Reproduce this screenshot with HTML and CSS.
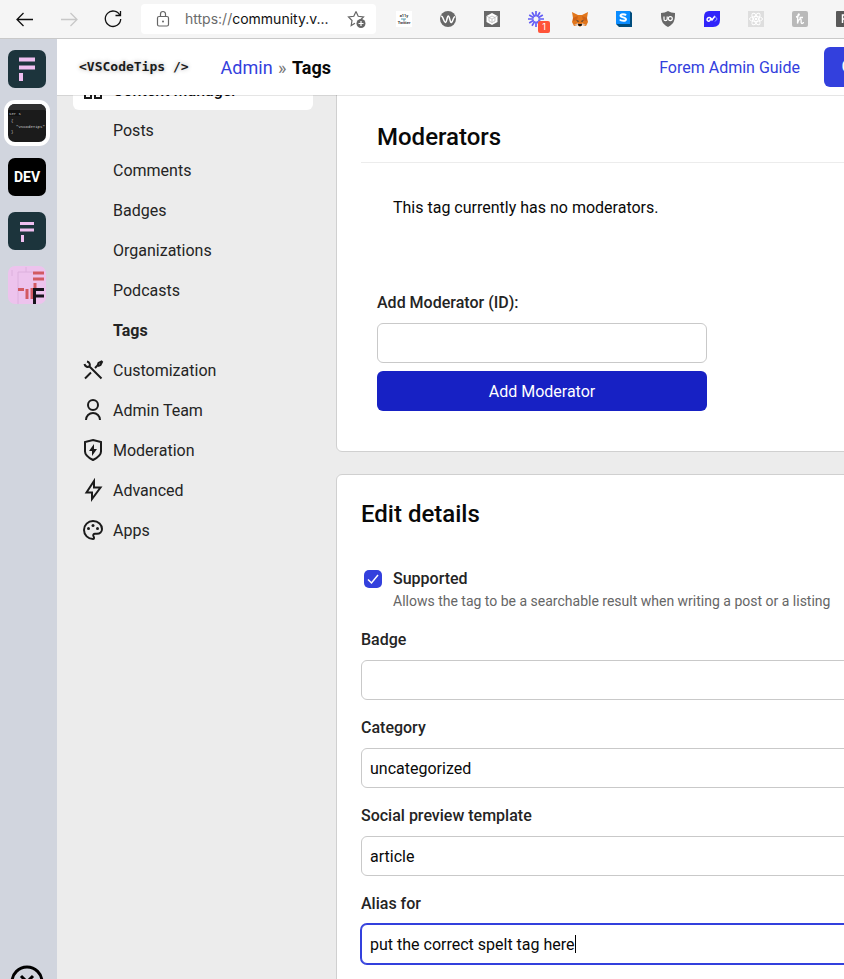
FILE: index.html
```
<!doctype html>
<html lang="en">
    <head>
        <meta charset="utf-8">
        <title>Tags</title>
        <meta name="viewport" content="width=device-width, initial-scale=1">
        <link rel="stylesheet" href="styles.css">
    </head>
    <body>
        <div class="toolbar">
            <button class="tool" aria-label="Back"><svg width="20" height="20" viewBox="0 0 20 20"><path d="M18 10.500H2M8.500 4L2 10.500L8.500 17"/></svg></button>
            <button class="tool disabled" aria-label="Forward" disabled><svg width="20" height="20" viewBox="0 0 20 20"><path d="M2 10.500H18M11.500 4L18 10.500L11.500 17"/></svg></button>
            <button class="tool" aria-label="Reload"><svg width="20" height="20" viewBox="0 0 20 20"><path d="M17 6.500A7.700 7.700 0 1 0 17.700 10M17.500 2V6.500H12.500"/></svg></button>
            <div class="address">
                <svg class="lock" width="16" height="18" viewBox="0 0 16 18"><rect x="2.500" y="6.500" width="11" height="9.500" rx="1.500"/><path d="M5.500 6.500V4a2.500 2.500 0 0 1 5 0V6.500"/><circle class="dot" cx="8" cy="11.500" r="1"/></svg>
                <span class="url"><span class="scheme">https://</span>community.v...</span>
                <svg class="star" width="20" height="20" viewBox="0 0 20 20"><path d="M9 2.500L11.200 7.300L16.500 8L12.800 11.500M8 14.200L4.200 16.500L5 11.500L1.500 8L6.800 7.300L9 2.500"/><circle class="dot" cx="14" cy="14.500" r="4.500"/><path class="plus" d="M14 12V17M11.500 14.500H16.500"/></svg>
            </div>
            <div class="extensions">
                <svg width="16" height="16" viewBox="0 0 16 16"><rect width="16" height="16" fill="#fff"/><text x="8" y="6" class="tiny">a11y</text><path d="M5 8H10M7 9H9" stroke="#5b9bb0"/><text x="8" y="13" class="tiny">Twitter</text></svg>
                <svg width="16" height="16" viewBox="0 0 16 16"><circle cx="8" cy="8" r="8" fill="#686868"/><path d="M1 5.500C3 4 4 12 5.500 11.500S7 5 8.300 5S10 12 11.500 11.500S13 6 15 5.500" fill="none" stroke="#fff" stroke-width="1.500"/></svg>
                <svg width="16" height="16" viewBox="0 0 16 16"><rect width="16" height="16" fill="#686868"/><path d="M8 2L13.500 5V11L8 14L2.500 11V5Z" fill="#fff"/><path d="M8 5L11 6.500V10L8 11.500L5 10V6.500ZM5 6.500L8 8L11 6.500M8 8V11.500M3 5L5 6.500M11 6.500L13 5" fill="none" stroke="#aaa" stroke-width=".6"/></svg>
                <span class="notified">
                    <svg width="16" height="16" viewBox="0 0 16 16"><path d="M8 0V5.500M8 10.500V16M0 8H5.500M10.500 8H16M1.200 4L5.800 6.800M10.200 9.200L14.800 12M4 1.200L6.800 5.800M9.200 10.200L12 14.800M12 1.200L9.200 5.800M6.800 10.200L4 14.800M14.800 4L10.200 6.800M5.800 9.200L1.200 12" stroke="#625df5" stroke-width="1.700"/></svg>
                    <span class="count">1</span>
                </span>
                <svg width="16" height="16" viewBox="1 0 16 16"><path d="M1 1L7 4H11L17 1L16 7L17 11L15 15L11 14L9 16L7 14L3 15L1 11L2 7Z" fill="#e2761b"/><path d="M2 7L7 5L6 9L2 10ZM16 7L11 5L12 9L16 10Z" fill="#cd6116"/><path d="M5 9L8 10L7 11ZM13 9L10 10L11 11Z" fill="#233447"/><path d="M7 13H11L10.500 15H7.500Z" fill="#161616"/><path d="M3 14L7 12V14ZM15 14L11 12V14Z" fill="#d7c1b3"/></svg>
                <svg width="16" height="16" viewBox="0 0 16 16"><path d="M3 0H14L16 2V16H3L0 13Z" fill="#004c7d"/><rect width="14" height="13" fill="#0a8cff"/><path d="M10 4.300C9 3 4.500 2.700 4.500 4.700S10 6 10 8.300S5 10 3.800 8.500" fill="none" stroke="#fff" stroke-width="2"/></svg>
                <svg width="16" height="16" viewBox="0 0 16 16"><path d="M8 0C10 1.300 12.500 2 15 2C15 9 14.500 12.500 8 16C1.500 12.500 1 9 1 2C3.500 2 6 1.300 8 0Z" fill="#686868"/><path d="M4 5.500V8.200Q4 9.700 5.500 9.700T7.200 8.200V5.500" fill="none" stroke="#fff" stroke-width="1.200"/><circle cx="10.300" cy="7.600" r="2" fill="none" stroke="#fff" stroke-width="1.200"/></svg>
                <svg width="16" height="16" viewBox="0 0 16 16"><path d="M5 0H16V9Q16 16 9 16H0V6Q0 0 5 0Z" fill="#3024fa"/><path d="M7.500 7L5.800 9.500C4.500 11 2.500 9.500 3.200 7.800S6 6 7 7.500L8 9L11 5" fill="none" stroke="#fff" stroke-width="1.500"/><path d="M11 5.500L13.200 8L11 10.500" fill="none" stroke="#9aa4ff"/></svg>
                <svg width="16" height="16" viewBox="0 0 16 16"><rect width="16" height="16" fill="#dedede"/><g fill="none" stroke="#fff"><ellipse cx="8" cy="8" rx="6.500" ry="2.500"/><ellipse cx="8" cy="8" rx="6.500" ry="2.500" transform="rotate(60 8 8)"/><ellipse cx="8" cy="8" rx="6.500" ry="2.500" transform="rotate(120 8 8)"/></g><circle cx="8" cy="8" r="1.300" fill="#fff"/></svg>
                <svg width="16" height="16" viewBox="0 0 16 16"><rect width="16" height="16" rx="2" fill="#b9b9b9"/><path d="M4 6C6 5.500 8 3.500 7 3S5.500 6 5.500 12.500C6.500 8 8.500 7 9 8.500S8.500 12.500 10 12.500S11.500 11 11.500 11M7.500 6.500H11" fill="none" stroke="#fff" stroke-width="1.300"/></svg>
                <svg width="16" height="16" viewBox="0 0 16 16"><rect width="16" height="16" rx="1" fill="#595959"/><path d="M6.500 12V4H12M6.500 8H11" fill="none" stroke="#fff" stroke-width="1.500"/></svg>
            </div>
        </div>
        <div class="window">
            <nav class="rail" aria-label="Communities">
                <a href="#" aria-label="Forem"><svg viewBox="0 0 38 38"><rect width="38" height="38" fill="#1c343c"/><path d="M11 9.500H27M11 17.500H27M13 23V31" stroke="#efbff0" stroke-width="4"/></svg></a>
                <a href="#" class="current" aria-label="VSCodeTips"><svg viewBox="0 0 38 38"><rect width="38" height="38" fill="#1b1b1b"/><rect width="38" height="6" fill="#303030"/><rect y="6" width="12" height="6" fill="#111"/><text x="1" y="11" class="code">ser s</text><text x="3" y="18" class="code">{</text><text x="8" y="24" class="code">"VSCodeTips"</text><text x="3" y="29" class="code">}</text></svg></a>
                <a href="#" aria-label="DEV"><svg viewBox="0 0 38 38"><rect width="38" height="38"/><text x="19" y="24" class="dev">DEV</text></svg></a>
                <a href="#" aria-label="Forem"><svg viewBox="0 0 38 38"><rect width="38" height="38" fill="#1c343c"/><path d="M12 11.500H26M12 18H26M14.500 23V30" stroke="#efbff0" stroke-width="3"/></svg></a>
                <a href="#" aria-label="Forem"><svg viewBox="0 0 38 38"><rect width="38" height="38" fill="#edc3ed"/><path d="M10 38V6H25M4 4V10M18 1V6" fill="none" stroke="#dcb0dd"/><path d="M25 7H36M25 13H36M10 23.500H16M27 17V22M19 23V33M24 22V33" stroke="#d25a62" stroke-width="3"/><path d="M26.500 38V23.500H36M26.500 30H36" fill="none" stroke="#16131b" stroke-width="3"/></svg></a>
                <button class="more" aria-label="Close"><svg viewBox="0 0 34 34" width="34" height="34"><circle cx="17" cy="17" r="15"/><path d="M11 11L23 23M23 11L11 23"/></svg></button>
            </nav>
            <div class="app">
                <header class="header">
                    <a href="#" class="logo">&lt;VSCodeTips /&gt;</a>
                    <div class="crumbs"><a href="#">Admin</a> <span class="sep">»</span> <b>Tags</b></div>
                    <a href="#" class="guide">Forem Admin Guide</a>
                    <button class="create">Create Post</button>
                </header>
                <div class="content">
                    <nav class="menu" aria-label="Admin">
                        <a href="#" class="open"><svg viewBox="0 0 24 24"><path d="M4 4H10V10H4ZM14 4H20V10H14ZM4 14H10V20H4ZM14 14H20V20H14Z"/></svg>Content Manager</a>
                        <a href="#" class="sub">Posts</a>
                        <a href="#" class="sub">Comments</a>
                        <a href="#" class="sub">Badges</a>
                        <a href="#" class="sub">Organizations</a>
                        <a href="#" class="sub">Podcasts</a>
                        <a href="#" class="sub active">Tags</a>
                        <a href="#"><svg viewBox="0 0 24 24"><path d="M7.500 7.500L20.500 20.500M4 20.500L10 14.500M14 10L16.500 7.500L17.500 5L20.500 3.500L21 4L19.500 7L17 8M3.500 6A3.500 3.500 0 0 0 8.500 8.500A3.500 3.500 0 0 0 6 3.500"/></svg>Customization</a>
                        <a href="#"><svg viewBox="0 0 24 24"><circle cx="12" cy="7" r="5"/><path d="M5 22A7 7 0 0 1 19 22"/></svg>Admin Team</a>
                        <a href="#"><svg viewBox="0 0 24 24"><path d="M12 2L20 4V13.500C20 17.500 16 20 12 22C8 20 4 17.500 4 13.500V4Z"/><path class="solid" d="M13 6L8 13H11V18L16 11H13Z"/></svg>Moderation</a>
                        <a href="#"><svg viewBox="0 0 24 24"><path d="M13 9.500H19.500L11 21V14.500H5.500L13 3Z"/></svg>Advanced</a>
                        <a href="#"><svg viewBox="0 0 24 24"><path d="M12 3C17.500 3 21 6.800 21 11C21 14 18.800 15.800 16 15.800H14C12.500 15.800 11.800 17 12.500 18.200C13.500 19.800 13 21 12 21A9 9 0 0 1 12 3Z"/><g class="solid"><circle cx="7.500" cy="10.500" r="1.500"/><circle cx="12" cy="7.500" r="1.500"/><circle cx="16.500" cy="10.500" r="1.500"/></g></svg>Apps</a>
                    </nav>
                    <main class="main">
                        <section class="card">
                            <h2 class="ruled">Moderators</h2>
                            <p class="empty">This tag currently has no moderators.</p>
                            <form class="add">
                                <label for="moderator">Add Moderator (ID):</label>
                                <input type="text" id="moderator">
                                <button type="button" class="submit">Add Moderator</button>
                            </form>
                        </section>
                        <section class="card">
                            <h2>Edit details</h2>
                            <form class="details">
                                <div class="check">
                                    <input type="checkbox" id="supported" checked>
                                    <div>
                                        <label for="supported">Supported</label>
                                        <p>Allows the tag to be a searchable result when writing a post or a listing</p>
                                    </div>
                                </div>
                                <div class="field"><label for="badge">Badge</label><select id="badge"><option></option></select></div>
                                <div class="field"><label for="category">Category</label><select id="category"><option>uncategorized</option></select></div>
                                <div class="field"><label for="template">Social preview template</label><input type="text" id="template" value="article"></div>
                                <div class="field"><label for="alias">Alias for</label><input type="text" id="alias" class="focused" value="put the correct spelt tag here"></div>
                            </form>
                        </section>
                    </main>
                </div>
            </div>
        </div>
    </body>
</html>
```
FILE: styles.css
```
* {
    box-sizing: border-box;
}
body {
    display: flex;
    flex-direction: column;
    height: 100vh;
    margin: 0;
    overflow: hidden;
    background: #ececec;
    color: #242424;
    font: 16px/24px Roboto, sans-serif;
}
button, input, select {
    font: inherit;
    color: #090909;
}
a {
    color: #3340dd;
    text-decoration: none;
}
h2, p {
    margin: 0;
}

/* browser toolbar */
.toolbar {
    display: flex;
    flex: none;
    align-items: center;
    height: 39px;
    padding-left: 15px;
    background: #f5f5f5;
    border-bottom: 1px solid #c9c9c9;
    font-family: Inter, sans-serif;
}
.tool {
    width: 20px;
    height: 20px;
    margin-right: 24px;
    padding: 0;
    border: 0;
    background: none;
}
.toolbar svg {
    display: block;
    flex: none;
}
.tool path {
    fill: none;
    stroke: #111;
    stroke-width: 1.3;
}
.disabled path {
    stroke: #c8c8c8;
}
.address {
    display: flex;
    flex: none;
    align-items: center;
    width: 235px;
    height: 30px;
    margin-left: -6px;
    padding: 0 9px 0 14px;
    border-radius: 4px;
    background: #fff;
}
.address path, .address rect {
    fill: none;
    stroke: #666;
    stroke-width: 1.2;
}
.address .dot {
    fill: #666;
}
.address .plus {
    stroke: #fff;
}
.url {
    flex: 1;
    margin-left: 14px;
    font-size: 14px;
    white-space: nowrap;
    color: #111;
}
.scheme {
    color: #6b6b6b;
}
.extensions {
    display: flex;
    gap: 28px;
    margin-left: 20px;
}
.notified {
    position: relative;
}
.count {
    position: absolute;
    left: 10px;
    top: 10px;
    width: 12px;
    height: 12px;
    border-radius: 2px;
    background: #ff5338;
    color: #fff;
    font-size: 9px;
    line-height: 12px;
    text-align: center;
}
.tiny {
    font: bold 4px Roboto, sans-serif;
    text-anchor: middle;
    fill: #333;
}

/* community switcher */
.window {
    display: flex;
    flex: 1;
    min-height: 0;
}
.rail {
    display: flex;
    flex: none;
    flex-direction: column;
    align-items: center;
    gap: 16px;
    width: 57px;
    padding: 11px 3px 0 0;
    background: #d1d5de;
}
.rail a {
    width: 38px;
    height: 38px;
    border-radius: 7px;
    overflow: hidden;
}
.rail a svg {
    display: block;
}
.rail .current {
    box-shadow: 0 0 0 4px #fff;
}
.code {
    font: 4px "Liberation Mono", monospace;
    fill: #ccc;
}
.dev {
    font: bold 14px Roboto, sans-serif;
    text-anchor: middle;
    fill: #fff;
}
.more {
    height: 34px;
    margin: auto 0 -20px;
    padding: 0;
    border: 0;
    background: none;
}
.more svg {
    fill: none;
    stroke: #000;
    stroke-width: 3;
}

/* admin */
.app {
    flex: 1 0 893px;
}
.header {
    position: relative;
    z-index: 1;
    display: flex;
    align-items: center;
    height: 56px;
    padding: 0 8px 0 16px;
    background: #fff;
    box-shadow: 0 1px 0 rgba(0, 0, 0, .1);
}
.logo {
    padding: 0 6px;
    font: bold 13px/20px "DejaVu Sans Mono", monospace;
    color: #1b1b1b;
    text-shadow: 0 0 3px #ddd, 0 0 5px #ddd, 0 0 6px #ddd;
}
.crumbs {
    margin-left: 26px;
    padding-top: 2px;
    font-size: 18px;
}
.crumbs b {
    color: #090909;
}
.sep {
    margin: 0 1px;
    color: #777;
}
.guide {
    margin-left: auto;
    padding-top: 1px;
}
.create {
    width: 118px;
    height: 40px;
    margin-left: 24px;
    border: 0;
    border-radius: 6px;
    background: #3340dd;
    color: #fff;
}
/* scrolled part way under the header */
.content {
    display: flex;
    gap: 23px;
    margin-top: -25px;
    padding: 0 16px;
}
.menu {
    flex: none;
    width: 240px;
}
.menu a {
    display: flex;
    align-items: center;
    gap: 8px;
    height: 40px;
    padding: 2px 8px 0;
    border-radius: 6px;
    color: #242424;
}
.menu svg {
    width: 24px;
    height: 24px;
    margin-top: -2px;
    fill: none;
    stroke: #1b1b1b;
    stroke-width: 2;
}
.menu .solid {
    fill: #1b1b1b;
    stroke: none;
}
.menu .open {
    background: #fff;
    color: #090909;
    font-weight: 500;
}
.menu .sub {
    padding-left: 40px;
}
.menu .active {
    font-weight: bold;
}
.main {
    flex: 1;
    min-width: 0;
}
.card {
    margin-bottom: 22px;
    padding: 24px;
    border: 1px solid #d0d0d0;
    border-radius: 6px;
    background: #fff;
}
h2 {
    font-size: 24px;
    font-weight: 500;
    line-height: 30px;
    color: #090909;
}
.ruled {
    padding: 27px 16px 10px;
    border-bottom: 1px solid #ececec;
}
.empty {
    padding: 33px 32px;
    color: #090909;
}
label {
    font-weight: 500;
}
.add {
    display: flex;
    flex-direction: column;
    gap: 8px;
    width: 330px;
    margin: 38px 16px 16px;
}
.card input[type=text], select {
    display: block;
    width: 100%;
    height: 40px;
    padding: 1px 8px 0;
    border: 1px solid #c9c9c9;
    border-radius: 6px;
    background: #fff;
    appearance: none;
}
.submit {
    height: 40px;
    padding-top: 2px;
    border: 0;
    border-radius: 6px;
    background: #1721c4;
    color: #fff;
}
.details {
    display: flex;
    flex-direction: column;
    gap: 16px;
    margin-top: 38px;
}
.check {
    display: flex;
    gap: 11px;
    padding-left: 3px;
}
.check input {
    width: 18px;
    height: 18px;
    margin: 3px 0 0;
    border-radius: 5px;
    appearance: none;
}
.check input:checked {
    background: #3340dd url("data:image/svg+xml,%3Csvg xmlns='http://www.w3.org/2000/svg' viewBox='0 0 18 18'%3E%3Cpath d='M4 9.500L7.500 13L14 5' fill='none' stroke='white' stroke-width='1.500'/%3E%3C/svg%3E");
}
.check p {
    font-size: 14px;
    line-height: 21px;
    color: #666;
    white-space: nowrap;
}
.field {
    display: flex;
    flex-direction: column;
    gap: 8px;
}
.card .field .focused {
    border-color: #3340dd;
    outline: 0;
    /* text cursor */
    background: linear-gradient(#000, #000) 213px 50% / 1px 18px no-repeat #fff;
    box-shadow: 0 0 0 1px #3340dd;
}
```
